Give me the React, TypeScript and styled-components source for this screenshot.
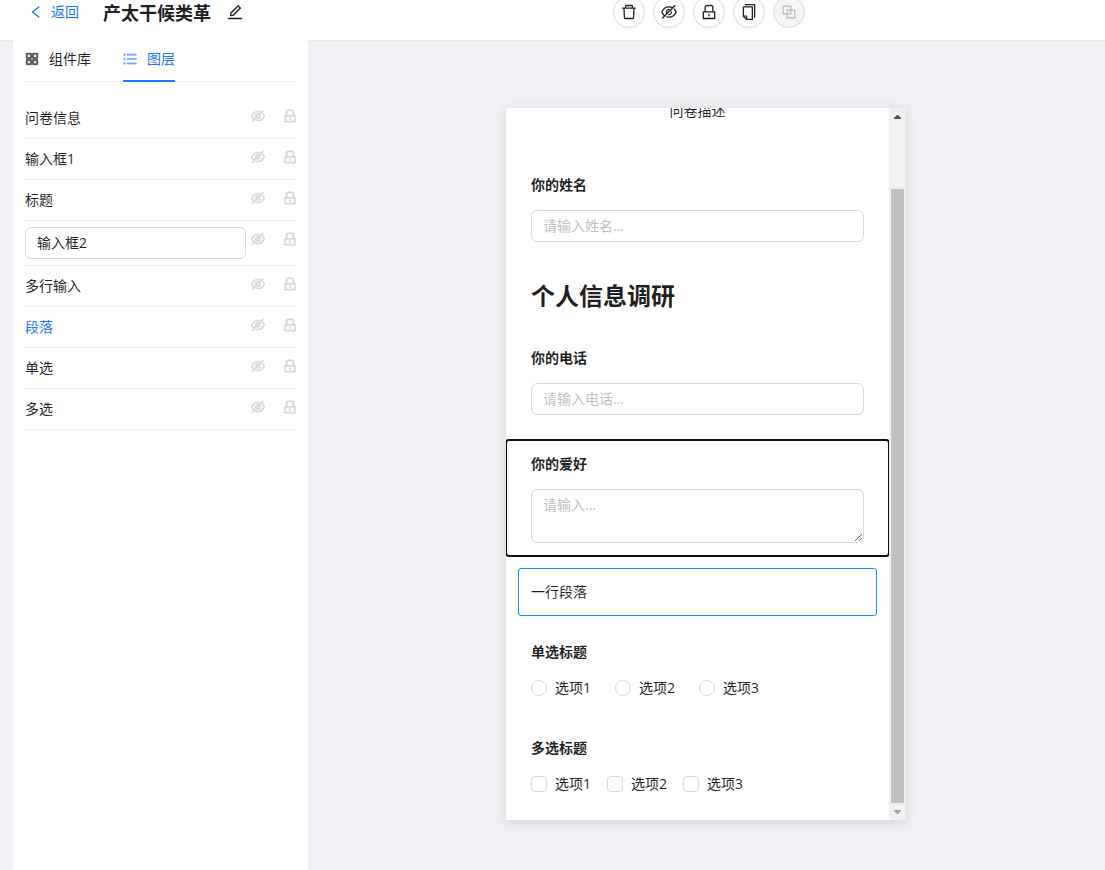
import React, { useLayoutEffect, useRef, useState } from "react";
import styled, { createGlobalStyle } from "styled-components";
import {
  AiOutlineAppstore,
  AiOutlineBars,
  AiOutlineBlock,
  AiOutlineCopy,
  AiOutlineDelete,
  AiOutlineEdit,
  AiOutlineEyeInvisible,
  AiOutlineLeft,
  AiOutlineLock,
} from "react-icons/ai";

const GlobalStyle = createGlobalStyle`
  *, *::before, *::after { box-sizing: border-box; }
  body {
    margin: 0;
    background: #f0f1f5;
    color: rgba(0, 0, 0, 0.88);
    font-family: "Open Sans", "Noto Sans CJK SC", sans-serif;
    font-size: 14px;
    line-height: 22px;
  }
  h1, h2 { font-family: "Noto Sans CJK SC", sans-serif; }
  button, input, textarea {
    font: inherit;
    color: inherit;
  }
  svg { display: block; flex: none; }
`;

const iconBox = "64 64 896 896";

const Page = styled.div`
  display: flex;
  flex-direction: column;
  min-height: 100vh;
`;

const Header = styled.header`
  display: flex;
  align-items: flex-end;
  height: 40px;
  padding: 0 300px 12px 29px;
  background: #fff;
  box-shadow: 0 1px 0 #e6e6e8;
`;

const HeaderLeft = styled.div`
  display: flex;
  flex: 1;
  align-items: center;
  height: 32px;
`;

const BackLink = styled.a`
  display: flex;
  align-items: center;
  gap: 8px;
  margin-right: 24px;
  color: #1677ff;
  text-decoration: none;
`;

const PageTitle = styled.h1`
  margin: 0 16px 0 0;
  font-size: 18px;
  line-height: 24px;
  font-weight: 700;
`;

const PlainButton = styled.button`
  display: flex;
  align-items: center;
  padding: 0;
  border: 0;
  background: none;
  cursor: pointer;
`;

const Toolbar = styled.div`
  display: flex;
  gap: 8px;
`;

const RoundButton = styled.button`
  display: flex;
  align-items: center;
  justify-content: center;
  width: 32px;
  height: 32px;
  padding: 0;
  border: 1px solid #d9d9d9;
  border-radius: 50%;
  background: #fff;
  box-shadow: 0 2px 0 rgba(0, 0, 0, 0.02);
  cursor: pointer;

  &:disabled {
    background: #f5f5f5;
    color: rgba(0, 0, 0, 0.25);
    box-shadow: none;
    cursor: not-allowed;
  }
`;

const Body = styled.main`
  display: flex;
  flex: 1;
  padding: 0 13px;
`;

const Sidebar = styled.aside`
  flex: none;
  width: 295px;
  padding: 0 12px;
  background: #fff;
`;

const Tabs = styled.div`
  display: flex;
  gap: 32px;
  height: 42px;
  margin-bottom: 16px;
  box-shadow: inset 0 -1px 0 #f0f0f0;
`;

const Tab = styled.button<{ $active?: boolean }>`
  display: flex;
  align-items: center;
  gap: 10px;
  padding: 8px 0 10px;
  border: 0;
  border-bottom: 2px solid ${(p) => (p.$active ? "#1677ff" : "transparent")};
  background: none;
  color: ${(p) => (p.$active ? "#1677ff" : "inherit")};
  cursor: pointer;

  svg {
    stroke-width: 50;
    opacity: ${(p) => (p.$active ? 0.6 : 0.75)};
  }
`;

const LayerList = styled.ul`
  margin: 0;
  padding: 0;
  list-style: none;
`;

const LayerRow = styled.li`
  display: grid;
  grid-template-columns: 1fr 45px;
  column-gap: 5px;
  align-items: start;
  padding: 6px 0;
  border-bottom: 1px solid #ececec;
`;

const LayerName = styled.span<{ $selected?: boolean }>`
  line-height: 28px;
  color: ${(p) => (p.$selected ? "#1677ff" : "inherit")};
`;

const LayerActions = styled.div`
  display: flex;
  gap: 18px;
  height: 24px;
  color: #d4d4d4;

  svg { stroke-width: 30; }
`;

const TextInput = styled.input`
  display: block;
  width: 100%;
  height: 32px;
  padding: 3px 11px 5px;
  border: 1px solid #d9d9d9;
  border-radius: 6px;
  background: #fff;
  outline: none;

  &::placeholder { color: #bfbfbf; }
`;

const TextBox = styled.textarea`
  display: block;
  width: 100%;
  height: 54px;
  padding: 4px 11px;
  border: 1px solid #d9d9d9;
  border-radius: 6px;
  resize: vertical;
  outline: none;

  &::placeholder { color: #bfbfbf; }
`;

const Stage = styled.section`
  display: flex;
  flex: 1;
  align-items: flex-start;
  justify-content: center;
  padding: 68px 0 50px 12px;
`;

const Phone = styled.div`
  display: flex;
  width: 400px;
  height: 712px;
  background: #fff;
  box-shadow: 0 2px 10px rgba(0, 0, 0, 0.12);
`;

const Survey = styled.div`
  flex: 1;
  overflow-y: scroll;
  scrollbar-width: none;
`;

const SurveyFlow = styled.div`
  display: flex;
  flex-direction: column;
  gap: 12px;
  padding: 12px 0;
`;

const Block = styled.div<{ $focused?: boolean }>`
  padding: 0 12px;
  border-radius: 3px;
  outline: ${(p) => (p.$focused ? "2px solid #101010" : "none")};
  outline-offset: -1px;
`;

const BlockBody = styled.div<{ $selected?: boolean }>`
  padding: 12px;
  border: 1px solid ${(p) => (p.$selected ? "#1890ff" : "#fff")};
  border-radius: 3px;
`;

const Description = styled.p`
  margin: 0 0 14px;
  text-align: center;
`;

const Paragraph = styled.p`
  margin: 0;
`;

const Heading = styled.h2`
  margin: 0;
  font-size: 24px;
  line-height: 29px;
  font-weight: 700;
`;

const FieldLabel = styled.label`
  display: block;
  margin-bottom: 14px;
  font-weight: 700;
`;

const OptionGroup = styled.fieldset`
  min-width: 0;
  margin: 0;
  padding: 0;
  border: 0;
`;

const GroupTitle = styled.legend`
  margin-bottom: 14px;
  padding: 0;
  font-weight: 700;
`;

const Options = styled.div<{ $gap: number }>`
  display: flex;
  gap: ${(p) => p.$gap}px;
`;

const Option = styled.label`
  display: flex;
  align-items: center;
  gap: 8px;
`;

const Choice = styled.input`
  appearance: none;
  width: 16px;
  height: 16px;
  margin: 0;
  border: 1px solid #d9d9d9;
  border-radius: ${(p) => (p.type === "radio" ? "50%" : "4px")};
  background: #fff;

  &:checked { background: #1677ff; border-color: #1677ff; }
`;

const ScrollBar = styled.div`
  display: flex;
  flex-direction: column;
  width: 17px;
  background: #f1f1f1;
`;

const ScrollArrow = styled.button`
  display: flex;
  align-items: center;
  justify-content: center;
  height: 17px;
  padding: 0;
  border: 0;
  background: none;
`;

const ScrollTrack = styled.div`
  display: flex;
  flex: 1;
  flex-direction: column;
  padding: 64px 2px 0;
`;

const ScrollThumb = styled.div`
  flex: 1;
  background: #c1c1c1;
`;

const tools = [
  { label: "删除", Icon: AiOutlineDelete },
  { label: "隐藏", Icon: AiOutlineEyeInvisible },
  { label: "锁定", Icon: AiOutlineLock },
  { label: "复制", Icon: AiOutlineCopy },
  { label: "粘贴", Icon: AiOutlineBlock, disabled: true },
];

const layers = [
  { name: "问卷信息" },
  { name: "输入框1" },
  { name: "标题" },
  { name: "输入框2", editing: true },
  { name: "多行输入" },
  { name: "段落", selected: true },
  { name: "单选" },
  { name: "多选" },
];

const options = ["选项1", "选项2", "选项3"];

function LayerItem({ name, editing, selected }: { name: string; editing?: boolean; selected?: boolean }) {
  const [value, setValue] = useState(name);
  return (
    <LayerRow>
      {editing ? (
        <TextInput aria-label="图层名称" value={value} onChange={(e) => setValue(e.target.value)} />
      ) : (
        <LayerName $selected={selected}>{value}</LayerName>
      )}
      <LayerActions>
        <PlainButton type="button" aria-label="隐藏">
          <AiOutlineEyeInvisible size={14} viewBox={iconBox} />
        </PlainButton>
        <PlainButton type="button" aria-label="锁定">
          <AiOutlineLock size={14} viewBox={iconBox} />
        </PlainButton>
      </LayerActions>
    </LayerRow>
  );
}

function ChoiceGroup({ title, type, gap }: { title: string; type: "radio" | "checkbox"; gap: number }) {
  return (
    <OptionGroup>
      <GroupTitle>{title}</GroupTitle>
      <Options $gap={gap}>
        {options.map((o) => (
          <Option key={o}>
            <Choice type={type} name={type} value={o} />
            {o}
          </Option>
        ))}
      </Options>
    </OptionGroup>
  );
}

export default function App() {
  const survey = useRef<HTMLDivElement>(null);

  // The survey opens at its last question.
  useLayoutEffect(() => {
    if (survey.current) survey.current.scrollTop = survey.current.scrollHeight;
  }, []);

  const scrollBy = (top: number) => survey.current?.scrollBy({ top });

  return (
    <Page>
      <GlobalStyle />
      <Header>
        <HeaderLeft>
          <BackLink href="#back">
            <AiOutlineLeft size={14} viewBox={iconBox} />
            返回
          </BackLink>
          <PageTitle>产太干候类革</PageTitle>
          <PlainButton type="button" aria-label="编辑标题">
            <AiOutlineEdit size={16} viewBox={iconBox} />
          </PlainButton>
        </HeaderLeft>
        <Toolbar>
          {tools.map(({ label, Icon, disabled }) => (
            <RoundButton key={label} type="button" aria-label={label} disabled={disabled}>
              <Icon size={16} viewBox={iconBox} />
            </RoundButton>
          ))}
        </Toolbar>
      </Header>
      <Body>
        <Sidebar>
          <Tabs role="tablist">
            <Tab type="button" role="tab" aria-selected={false}>
              <AiOutlineAppstore size={14} viewBox={iconBox} />
              组件库
            </Tab>
            <Tab type="button" role="tab" aria-selected $active>
              <AiOutlineBars size={14} viewBox={iconBox} />
              图层
            </Tab>
          </Tabs>
          <LayerList>
            {layers.map((layer) => (
              <LayerItem key={layer.name} {...layer} />
            ))}
          </LayerList>
        </Sidebar>
        <Stage>
          <Phone>
            <Survey ref={survey}>
              <SurveyFlow>
                <Block>
                  <BlockBody>
                    <Description>问卷描述</Description>
                  </BlockBody>
                </Block>
                <Block>
                  <BlockBody>
                    <FieldLabel htmlFor="name">你的姓名</FieldLabel>
                    <TextInput id="name" placeholder="请输入姓名..." />
                  </BlockBody>
                </Block>
                <Block>
                  <BlockBody>
                    <Heading>个人信息调研</Heading>
                  </BlockBody>
                </Block>
                <Block>
                  <BlockBody>
                    <FieldLabel htmlFor="phone">你的电话</FieldLabel>
                    <TextInput id="phone" placeholder="请输入电话..." />
                  </BlockBody>
                </Block>
                <Block $focused>
                  <BlockBody>
                    <FieldLabel htmlFor="hobby">你的爱好</FieldLabel>
                    <TextBox id="hobby" placeholder="请输入..." />
                  </BlockBody>
                </Block>
                <Block>
                  <BlockBody $selected>
                    <Paragraph>一行段落</Paragraph>
                  </BlockBody>
                </Block>
                <Block>
                  <BlockBody>
                    <ChoiceGroup title="单选标题" type="radio" gap={24} />
                  </BlockBody>
                </Block>
                <Block>
                  <BlockBody>
                    <ChoiceGroup title="多选标题" type="checkbox" gap={16} />
                  </BlockBody>
                </Block>
              </SurveyFlow>
            </Survey>
            <ScrollBar>
              <ScrollArrow type="button" aria-label="向上滚动" onClick={() => scrollBy(-40)}>
                <svg width="7" height="4" viewBox="0 0 7 4" fill="#505050">
                  <path d="M3 0h1l3 3v1H0V3z" />
                </svg>
              </ScrollArrow>
              <ScrollTrack>
                <ScrollThumb />
              </ScrollTrack>
              <ScrollArrow type="button" aria-label="向下滚动" onClick={() => scrollBy(40)}>
                <svg width="7" height="4" viewBox="0 0 7 4" fill="#a3a3a3">
                  <path d="M0 0h7v1L4 4H3L0 1z" />
                </svg>
              </ScrollArrow>
            </ScrollBar>
          </Phone>
        </Stage>
      </Body>
    </Page>
  );
}
